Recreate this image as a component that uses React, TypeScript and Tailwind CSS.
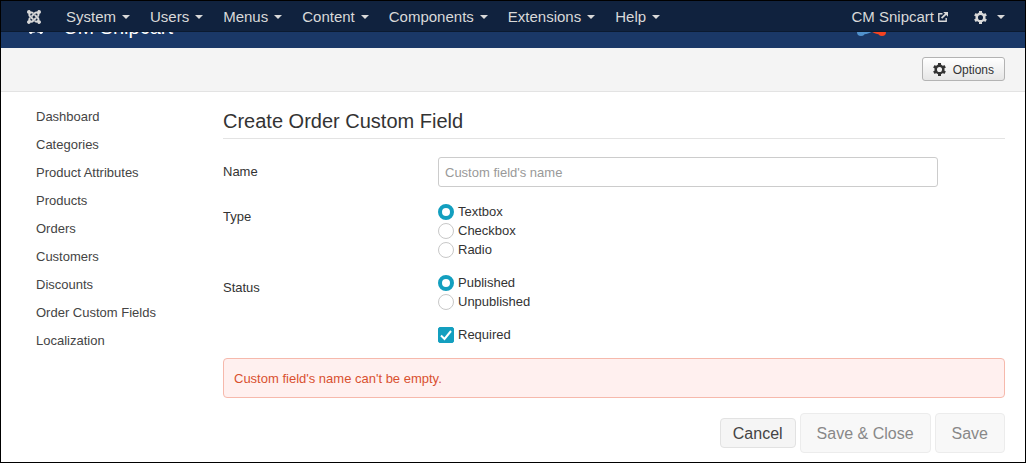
import React from "react";
import { FaJoomla } from "react-icons/fa";

const menus = ["System", "Users", "Menus", "Content", "Components", "Extensions", "Help"];

const links = [
  "Dashboard",
  "Categories",
  "Product Attributes",
  "Products",
  "Orders",
  "Customers",
  "Discounts",
  "Order Custom Fields",
  "Localization",
];

function Caret() {
  return (
    <svg className="h-1 w-2" viewBox="0 0 8 4" fill="currentColor" aria-hidden="true">
      <path d="M0 0h8L4 4z" />
    </svg>
  );
}

function Gear() {
  return (
    <svg className="size-[13px]" viewBox="0 0 13 13" fill="none" stroke="currentColor" aria-hidden="true">
      <circle cx="6.5" cy="6.5" r="3.8" strokeWidth="2.5" />
      <g strokeWidth="3">
        <path d="M6.5 0v2.4M6.5 10.6V13" />
        <path d="M6.5 0v2.4M6.5 10.6V13" transform="rotate(60 6.5 6.5)" />
        <path d="M6.5 0v2.4M6.5 10.6V13" transform="rotate(120 6.5 6.5)" />
      </g>
    </svg>
  );
}

function ExternalIcon() {
  return (
    <svg className="size-[10px]" viewBox="0 0 10 10" fill="none" stroke="currentColor" aria-hidden="true">
      <path d="M4.5 1.7H.8v7.5h7.4V6" strokeWidth="1.4" />
      <path d="M3.6 6.2L8.3 1.6" strokeWidth="1.8" />
      <path d="M5.2 0H10v4.8z" fill="currentColor" stroke="none" />
    </svg>
  );
}

function Navbar() {
  return (
    <nav className="fixed inset-x-px top-px z-10 flex h-[31px] items-center justify-between border-b border-[#0b1a30] bg-[#10223e] pl-[25px] pr-5 pt-0.5 text-[15px] leading-5 text-[#d9d9d9]">
      <div className="flex items-center">
        <a href="#" aria-label="Joomla" className="mr-[14px]">
          <FaJoomla className="size-4" />
        </a>
        {menus.map((m) => (
          <button key={m} type="button" className="flex items-center gap-[6px] px-[10px]">
            {m}
            <Caret />
          </button>
        ))}
      </div>
      <div className="flex items-center gap-[26px]">
        <a href="#" className="flex items-center gap-1">
          CM Snipcart
          <ExternalIcon />
        </a>
        <button type="button" aria-label="Account" className="flex items-center gap-[10px]">
          <Gear />
          <Caret />
        </button>
      </div>
    </nav>
  );
}

function Brand() {
  return (
    <svg className="h-[30px] w-[30px]" viewBox="0 0 30 30" aria-hidden="true">
      <path d="M5 26Q12 27 17 22" stroke="#5091cd" strokeWidth="4" fill="none" />
      <circle cx="5" cy="26" r="4" fill="#5091cd" />
      <path d="M16 23Q20 27 26 26" stroke="#f44321" strokeWidth="4" fill="none" />
      <circle cx="26" cy="26" r="4" fill="#f44321" />
      <circle cx="5" cy="4" r="4" fill="#7ac143" />
      <circle cx="26" cy="4" r="4" fill="#f9a541" />
    </svg>
  );
}

type ChoiceProps = { name: string; label: string; checked?: boolean };

function RadioChoice({ name, label, checked }: ChoiceProps) {
  return (
    <label className="flex h-[19px] items-center gap-1">
      <input
        type="radio"
        name={name}
        defaultChecked={checked}
        className="size-4 appearance-none rounded-full border border-[#c8c8c8] bg-white checked:border-4 checked:border-[#139fbf]"
      />
      {label}
    </label>
  );
}

function Row({ label, children }: { label: string; children: React.ReactNode }) {
  return (
    <fieldset className="flex">
      <legend className="float-left w-[215px] pt-[6px]">{label}</legend>
      <div>{children}</div>
    </fieldset>
  );
}

export default function App() {
  return (
    <div className="flex min-h-screen flex-col border border-black bg-white font-['Liberation_Sans',Arial,sans-serif] text-[13px] leading-[18px] text-[#333]">
      <Navbar />
      <header className="flex h-[47px] items-start justify-between bg-[#1a3867] pl-[27px] pr-[139px] pt-[5px] text-white">
        <div className="flex items-center gap-[19px] pt-[9px]">
          <FaJoomla className="size-4" />
          <h1 className="text-xl leading-6">CM Snipcart</h1>
        </div>
        <Brand />
      </header>
      <div className="flex justify-end border-b border-[#e3e3e3] bg-[#f4f4f4] px-5 pb-[10px] pt-[9px]">
        <button
          type="button"
          className="flex h-6 items-center gap-[7px] rounded-[3px] border border-[#b3b3b3] bg-linear-to-b from-white to-[#e6e6e6] px-[10px] text-xs"
        >
          <Gear />
          <span className="pt-0.5">Options</span>
        </button>
      </div>

      <div className="flex flex-1 pb-[9px] pl-[35px] pr-5 pt-4">
        <nav className="w-[187px] shrink-0">
          <ul className="flex flex-col gap-[10px]">
            {links.map((l) => (
              <li key={l}>
                <a href="#" className="text-[#444]">
                  {l}
                </a>
              </li>
            ))}
          </ul>
        </nav>
        <main className="min-w-0 flex-1">
          <h2 className="border-b border-[#e3e3e3] pb-1 text-xl leading-[26px]">Create Order Custom Field</h2>
          <form className="flex flex-col pt-[18px]">
            <div className="flex">
              <label htmlFor="name" className="w-[215px] shrink-0 pt-[6px]">
                Name
              </label>
              <input
                id="name"
                type="text"
                placeholder="Custom field's name"
                className="h-[30px] w-full max-w-[500px] rounded-[3px] border border-[#ccc] px-[6px] placeholder:text-[#999]"
              />
            </div>
            <div className="mt-[15px]">
              <Row label="Type">
                <RadioChoice name="type" label="Textbox" checked />
                <RadioChoice name="type" label="Checkbox" />
                <RadioChoice name="type" label="Radio" />
              </Row>
            </div>
            <div className="mt-[14px]">
              <Row label="Status">
                <RadioChoice name="status" label="Published" checked />
                <RadioChoice name="status" label="Unpublished" />
              </Row>
            </div>
            <label className="ml-[215px] mt-[15px] flex items-center gap-1 self-start">
              <span className="grid">
                <input
                  type="checkbox"
                  defaultChecked
                  className="peer col-start-1 row-start-1 size-4 appearance-none rounded-xs border border-[#c8c8c8] checked:border-[#139fbf] checked:bg-[#139fbf]"
                />
                <svg
                  className="pointer-events-none col-start-1 row-start-1 size-4 text-white opacity-0 peer-checked:opacity-100"
                  viewBox="0 0 16 16"
                  fill="none"
                  stroke="currentColor"
                  strokeWidth="2"
                  aria-hidden="true"
                >
                  <path d="M3 8.5L6.5 12 13 4" />
                </svg>
              </span>
              Required
            </label>
            <div role="alert" className="mt-[14px] rounded-[4px] border border-[#f6b9ac] bg-[#fff0ef] px-[10px] pb-[9px] pt-[11px] text-[#d9502f]">
              Custom field's name can't be empty.
            </div>
            <div className="mt-[15px] flex items-center justify-end gap-1 text-base leading-5">
              <button type="button" className="h-[30px] rounded-[4px] border border-[#e2e2e2] bg-[#f5f5f5] px-3 pt-0.5 text-[#444]">
                Cancel
              </button>
              <button type="button" disabled className="h-10 rounded-[4px] border border-[#ececec] bg-[#f8f8f8] px-4 pt-0.5 text-[#888]">
                Save &amp; Close
              </button>
              <button type="submit" disabled className="h-10 rounded-[4px] border border-[#ececec] bg-[#f8f8f8] px-4 pt-0.5 text-[#888]">
                Save
              </button>
            </div>
          </form>
        </main>
      </div>
    </div>
  );
}
